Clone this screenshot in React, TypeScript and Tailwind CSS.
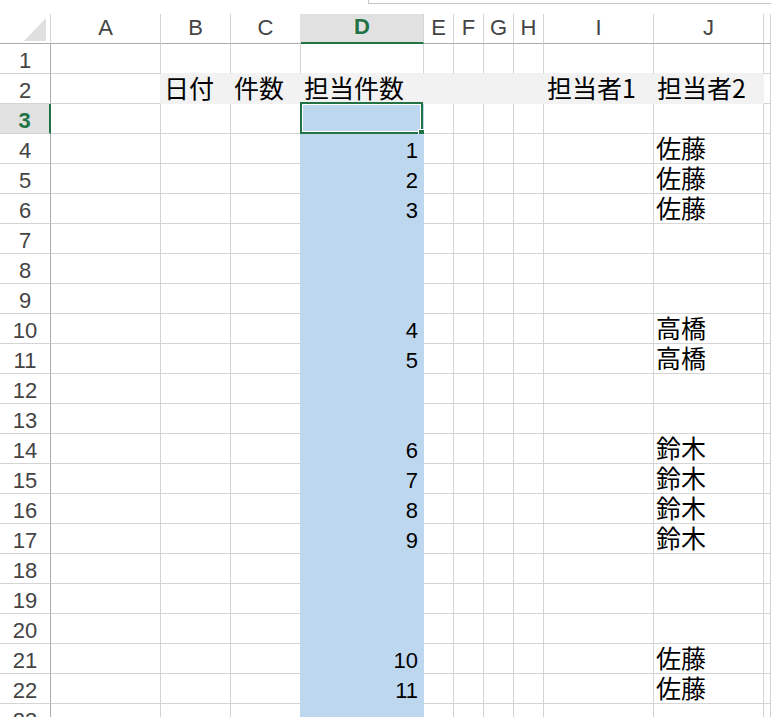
import React from 'react';

const COLS = ['A', 'B', 'C', 'D', 'E', 'F', 'G', 'H', 'I', 'J', 'K'];
const FILLED = ['B', 'C', 'D', 'E', 'F', 'G', 'H', 'I', 'J'];
const ROWS = Array.from({ length: 23 }, (_, i) => i + 1);

const LABELS: Record<string, string> = {
  B: '日付',
  C: '件数',
  D: '担当件数',
  I: '担当者1',
  J: '担当者2',
};

const COUNTS: Record<number, number> = {
  4: 1, 5: 2, 6: 3, 10: 4, 11: 5, 14: 6, 15: 7, 16: 8, 17: 9, 21: 10, 22: 11,
};

const NAMES: Record<number, string> = {
  4: '佐藤', 5: '佐藤', 6: '佐藤',
  10: '高橋', 11: '高橋',
  14: '鈴木', 15: '鈴木', 16: '鈴木', 17: '鈴木',
  21: '佐藤', 22: '佐藤',
};

const latin = "font-['Liberation_Sans',Arial,sans-serif]";
const cjk = "font-['Noto_Sans_CJK_JP',sans-serif]";

// gridline colours, Excel hides them under filled cells
function cellBorders(col: string, row: number) {
  if (row === 2 && FILLED.includes(col)) return 'bg-[#f2f2f2] border-r border-b border-[#f2f2f2]';
  if (col === 'D' && row >= 3) return 'bg-[#bdd7ee] border-r border-b border-[#bdd7ee]';
  if (row === 1 && FILLED.includes(col)) return 'bg-white border-r border-b border-r-[#d4d4d4] border-b-[#f2f2f2]';
  if (row === 2 && col === 'A') return 'bg-white border-r border-b border-r-[#f2f2f2] border-b-[#d4d4d4]';
  if (col === 'C' && row >= 3) return 'bg-white border-r border-b border-r-[#bdd7ee] border-b-[#d4d4d4]';
  return 'bg-white border-r border-b border-[#d4d4d4]';
}

function ColumnHeader({ col }: { col: string }) {
  const active = col === 'D';
  return (
    <div
      className={`flex items-end justify-center pb-[4px] text-[22px] leading-none ${latin} ${
        active
          ? 'bg-[#e1e1e1] border-r border-r-[#d4d4d4] border-b-2 border-b-[#217346] font-bold text-[#217346]'
          : col === 'C'
            ? 'border-r border-b border-r-[#e1e1e1] border-b-[#ababab] text-[#444]'
            : 'border-r border-b border-r-[#d4d4d4] border-b-[#ababab] text-[#444]'
      }`}
    >
      {col === 'K' ? '' : col}
    </div>
  );
}

function RowHeader({ row }: { row: number }) {
  const active = row === 3;
  return (
    <div
      className={`flex items-end justify-center pb-[1px] text-[22px] leading-none ${latin} border-b border-b-[#d4d4d4] ${
        active
          ? 'bg-[#e1e1e1] border-r-2 border-r-[#217346] font-bold text-[#217346]'
          : 'bg-white border-r border-r-[#ababab] text-[#444]'
      }`}
    >
      {row}
    </div>
  );
}

function Cell({ col, row }: { col: string; row: number }) {
  let content: React.ReactNode = null;

  if (row === 2 && LABELS[col]) {
    content = (
      <span className={`pl-[3px] pb-[3px] text-[25px] leading-none text-black whitespace-nowrap ${cjk}`}>
        {LABELS[col]}
      </span>
    );
  } else if (col === 'D' && COUNTS[row] !== undefined) {
    content = (
      <span className={`ml-auto pr-[5px] pb-[1px] text-[22px] leading-none text-black ${latin}`}>
        {COUNTS[row]}
      </span>
    );
  } else if (col === 'J' && NAMES[row]) {
    content = (
      <span className={`pl-[2px] pb-[3px] text-[25px] leading-none text-black whitespace-nowrap ${cjk}`}>
        {NAMES[row]}
      </span>
    );
  }

  const isActive = col === 'D' && row === 3;

  return (
    <div className={`relative flex items-end ${cellBorders(col, row)}`}>
      {content}
      {isActive && (
        <div className="absolute left-[-1px] top-[-2px] w-[123px] h-[32px] border-2 border-[#217346] shadow-[inset_0_0_0_1px_#ffffff]">
          <div className="absolute left-[116px] top-[25px] w-[8px] h-[8px] bg-[#217346] border border-white" />
        </div>
      )}
    </div>
  );
}

export default function App() {
  return (
    <div className="w-[771px] h-[717px] overflow-hidden bg-white">
      {/* bottom edge of the formula bar */}
      <div className="flex h-[14px]">
        <div className="w-[368px]" />
        <div className="flex-1 h-[4px] border-l border-b border-[#c6c6c6]" />
      </div>

      <div className="grid grid-cols-[51px_110px_70px_70px_123px_30px_30px_30px_30px_110px_110px_1fr] auto-rows-[30px]">
        <div className="flex items-end justify-end pr-[4px] pb-[2px] border-r border-r-[#d4d4d4] border-b border-b-[#ababab]">
          <svg width="22" height="23" viewBox="0 0 22 23">
            <polygon points="0,23 22,23 22,0" fill="#dfdfdf" />
          </svg>
        </div>
        {COLS.map((c) => (
          <ColumnHeader key={c} col={c} />
        ))}

        {ROWS.map((r) => (
          <React.Fragment key={r}>
            <RowHeader row={r} />
            {COLS.map((c) => (
              <Cell key={c} col={c} row={r} />
            ))}
          </React.Fragment>
        ))}
      </div>
    </div>
  );
}
